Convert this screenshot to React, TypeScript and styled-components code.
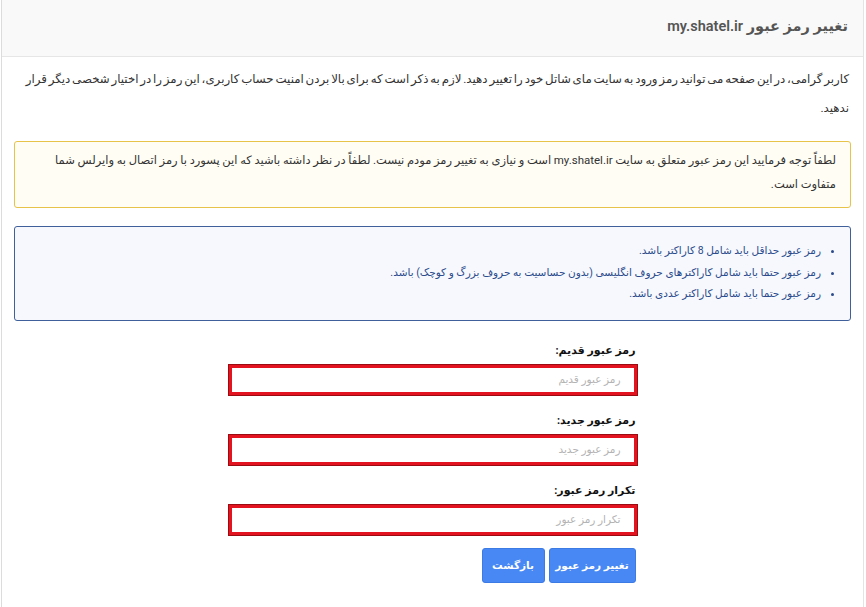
import React from 'react';
import styled, { createGlobalStyle } from 'styled-components';

const GlobalStyle = createGlobalStyle`
  html, body {
    margin: 0;
    padding: 0;
    background: #fff;
  }
  body {
    font-family: "Roboto", "DejaVu Sans", sans-serif;
    color: #333;
  }
`;

const Card = styled.div`
  direction: rtl;
  box-sizing: border-box;
  min-height: 607px;
  margin: 0 2px 0 1px;
  border-left: 1px solid #dcdcdc;
  border-right: 1px solid #e4e4e4;
  background: #fff;
`;

const Header = styled.div`
  height: 57px;
  box-sizing: border-box;
  display: flex;
  align-items: center;
  padding: 0 15px 4px;
  background: #f9f9f9;
  border-bottom: 1px solid #e6e6e6;
`;

const Title = styled.h3`
  margin: 0;
  font-size: 14.5px;
  font-weight: 600;
  color: #555;
`;

const Body = styled.div`
  padding: 8px 12px 0;
`;

const Intro = styled.p`
  margin: 0 0 18px;
  padding: 0 2px;
  font-size: 11.8px;
  word-spacing: -1.1px;
  line-height: 29px;
  color: #333;
`;

const Alert = styled.div<{ $tone: 'warning' | 'info' }>`
  border: 1px solid ${(p) => (p.$tone === 'warning' ? '#e7c34a' : '#40609c')};
  background: ${(p) => (p.$tone === 'warning' ? '#fffdf4' : '#f6f8fd')};
  border-radius: 3px;
  margin-bottom: 18px;
  padding: ${(p) => (p.$tone === 'warning' ? '6px 14px 11px' : '13px 0 15px')};
  color: ${(p) => (p.$tone === 'warning' ? '#333' : '#2b4b8c')};
  font-size: ${(p) => (p.$tone === 'warning' ? '11.5px' : '10.5px')};
  word-spacing: ${(p) => (p.$tone === 'warning' ? '-0.2px' : '0')};
  line-height: ${(p) => (p.$tone === 'warning' ? '24px' : '21.5px')};
`;

const Rules = styled.ul`
  margin: 0;
  padding: 0 29px 0 0;
  list-style: disc;
`;

const Form = styled.form`
  width: 410px;
  margin: 20px auto 0;
  display: flex;
  flex-direction: column;
  gap: 15px;
`;

const Field = styled.div`
  display: flex;
  flex-direction: column;
  gap: 3px;
`;

const Label = styled.label`
  font-size: 11px;
  font-weight: bold;
  line-height: 20px;
  color: #111;
  padding-right: 2px;
`;

const Input = styled.input`
  box-sizing: border-box;
  width: 100%;
  height: 32px;
  direction: rtl;
  padding: 0 13px;
  border: 4px solid #e3141f;
  outline: 1px solid #9a0c12;
  outline-offset: -1px;
  background: #fff;
  font-family: "Roboto", "DejaVu Sans", sans-serif;
  font-size: 10.5px;
  color: #333;

  &::placeholder {
    color: #b3b3b3;
  }
`;

const Actions = styled.div`
  display: flex;
  gap: 4px;
  margin-top: -3px;
  padding-right: 2px;
`;

const Button = styled.button<{ $w: number }>`
  width: ${(p) => p.$w}px;
  height: 35px;
  padding: 0;
  white-space: nowrap;
  border: 1px solid #3c7ae4;
  border-radius: 3px;
  background: #4788f4;
  color: #fff;
  font-family: "Roboto", "DejaVu Sans", sans-serif;
  font-size: 10.5px;
  font-weight: bold;
  cursor: pointer;
`;

const fields = [
  { label: 'رمز عبور قدیم:', placeholder: 'رمز عبور قدیم' },
  { label: 'رمز عبور جدید:', placeholder: 'رمز عبور جدید' },
  { label: 'تکرار رمز عبور:', placeholder: 'تکرار رمز عبور' },
];

const rules = [
  'رمز عبور حداقل باید شامل 8 کاراکتر باشد.',
  'رمز عبور حتما باید شامل کاراکترهای حروف انگلیسی (بدون حساسیت به حروف بزرگ و کوچک) باشد.',
  'رمز عبور حتما باید شامل کاراکتر عددی باشد.',
];

export default function App() {
  return (
    <>
      <GlobalStyle />
      <Card>
        <Header>
          <Title>تغییر رمز عبور my.shatel.ir</Title>
        </Header>
        <Body>
          <Intro>
            کاربر گرامی، در این صفحه می توانید رمز ورود به سایت مای شاتل خود را تغییر دهید. لازم به ذکر است که
            برای بالا بردن امنیت حساب کاربری، این رمز را در اختیار شخصی دیگر قرار ندهید.
          </Intro>
          <Alert $tone="warning">
            لطفاً توجه فرمایید این رمز عبور متعلق به سایت my.shatel.ir است و نیازی به تغییر رمز مودم نیست. لطفاً در
            نظر داشته باشید که این پسورد با رمز اتصال به وایرلس شما متفاوت است.
          </Alert>
          <Alert $tone="info">
            <Rules>
              {rules.map((r) => (
                <li key={r}>{r}</li>
              ))}
            </Rules>
          </Alert>
          <Form onSubmit={(e) => e.preventDefault()}>
            {fields.map((f) => (
              <Field key={f.label}>
                <Label>{f.label}</Label>
                <Input type="password" placeholder={f.placeholder} />
              </Field>
            ))}
            <Actions>
              <Button type="submit" $w={87}>تغییر رمز عبور</Button>
              <Button type="button" $w={63}>بازگشت</Button>
            </Actions>
          </Form>
        </Body>
      </Card>
    </>
  );
}
